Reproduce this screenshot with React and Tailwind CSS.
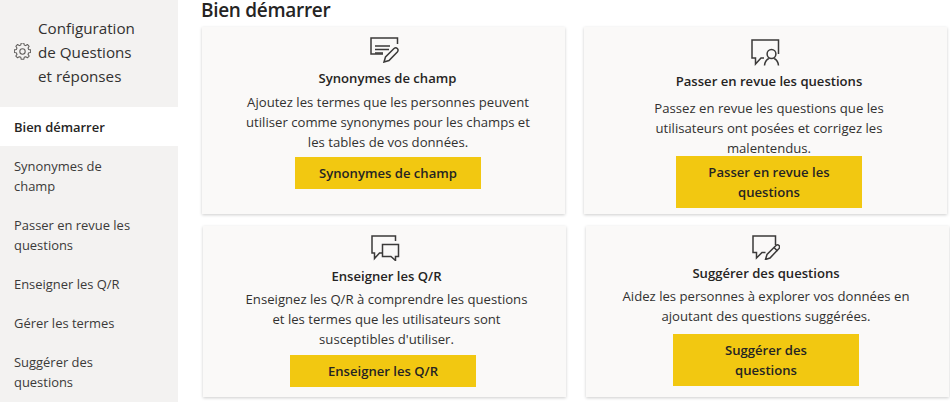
const ff = { fontFamily: '"Open Sans", "Liberation Sans", sans-serif' };

const ChartIcon = ({ kind }) => {
  const common = { fill: "none", stroke: "#3b3a39", strokeWidth: 1.5 };
  if (kind === "syn")
    return (
      <svg width="29" height="26" viewBox="0 0 29 26" {...common}>
        <path d="M27.500 7V1H1V17H13" />
        <path d="M5 9H20M5 12.500H19M5 16H13" />
        <path d="M14 25L15.500 20L24 11.500Q25.800 10 27.300 11.500Q28.800 13 27.300 15L19 23.500Z" />
      </svg>
    );
  if (kind === "rev")
    return (
      <svg width="29" height="27" viewBox="0 0 29 27" {...common}>
        <path d="M27.500 15V1H1V19H4.500V25L10 19H13" />
        <circle cx="20.500" cy="15" r="4.400" />
        <path d="M13.500 26.500Q14 21.500 17.800 19.500M27.500 26.500Q27 21.500 23.200 19.500" />
      </svg>
    );
  if (kind === "teach")
    return (
      <svg width="29" height="26" viewBox="0 0 29 26" {...common}>
        <path d="M24.500 6V1H1V18H3.500V23.500L8.500 18H11" />
        <path d="M11.500 9.500H27.500V21.500H24.500V25.500L20 21.500H11.500Z" />
      </svg>
    );
  return (
    <svg width="28" height="25" viewBox="0 0 28 25" {...common}>
      <path d="M23.500 10V1H1V17.500H4.500V23L10 17.500H13.500" />
      <path d="M13.500 24.500L15 19.500L24 10.500Q25.500 9 27 10.500Q28.300 12 27 13.500L18 23Z" />
      <path d="M22 12.500L25.500 16" />
    </svg>
  );
};

const Card = ({ className, bodyClass, icon, iconClass, title, titleClass, body, btn, btnClass }) => (
  <div className={`bg-[#faf9f8] w-[363px] shadow-[0_1px_3px_rgba(0,0,0,0.2)] flex flex-col items-center ${className}`}>
    <div className={iconClass}>
      <ChartIcon kind={icon} />
    </div>
    <div className={`text-[13.1px] font-semibold leading-5 text-[#252423] whitespace-nowrap ${titleClass}`}>{title}</div>
    <div className={`text-[13.15px] leading-5 text-[#323130] text-center whitespace-nowrap ${bodyClass}`}>{body}</div>
    <div className={`w-[186px] bg-[#f2c811] text-[13.1px] font-semibold leading-5 text-[#252423] text-center flex items-center justify-center px-2 ${btnClass}`}>
      {btn}
    </div>
  </div>
);

const NavItem = ({ children, active }) => (
  <div
    className={`px-[14px] text-[12.95px] leading-5 ${active ? "bg-white font-semibold text-[#252423] py-[10px] h-[39px]" : "text-[#3b3a39]"}`}
  >
    {children}
  </div>
);

export default function App() {
  return (
    <div style={ff} className="w-[950px] h-[402px] overflow-hidden flex bg-white">
      <aside className="w-[178px] h-[402px] bg-[#f3f2f1] shrink-0 flex flex-col">
        <div className="h-[103px] mb-[4px] flex items-center pl-[14px] gap-[7px]">
          <svg width="17" height="17" viewBox="0 0 24 24" fill="none" stroke="#605e5c" strokeWidth="1.5" strokeLinejoin="round">
            <path d="M10.200 1.500h3.600l.6 2.800 2.100.9 2.400-1.600 2.500 2.500-1.600 2.400.9 2.100 2.800.6v3.600l-2.800.6-.9 2.100 1.600 2.400-2.500 2.500-2.400-1.600-2.100.9-.6 2.800h-3.600l-.6-2.800-2.100-.9-2.400 1.600-2.500-2.500 1.600-2.400-.9-2.100-2.800-.6v-3.600l2.800-.6.900-2.100-1.600-2.400 2.500-2.500 2.400 1.600 2.100-.9z" transform="translate(0 -1.500)" />
            <circle cx="12" cy="12" r="3.800" />
          </svg>
          <div className="text-[15.2px] leading-6 text-[#323130]">
            Configuration
            <br />
            de Questions
            <br />
            et réponses
          </div>
        </div>
        <NavItem active>Bien démarrer</NavItem>
        <div className="flex flex-col gap-[19px] pt-[10px]">
          <NavItem>Synonymes de<br />champ</NavItem>
          <NavItem>Passer en revue les<br />questions</NavItem>
          <NavItem>Enseigner les Q/R</NavItem>
          <NavItem>Gérer les termes</NavItem>
          <NavItem>Suggérer des<br />questions</NavItem>
        </div>
      </aside>
      <main className="flex-1 min-w-0 flex flex-col">
        <h1 className="text-[19px] tracking-[-0.3px] leading-5 font-semibold text-[#252423] ml-[23px] h-[27px]">Bien démarrer</h1>
        <div className="flex gap-[19px] ml-[24px]">
          <Card
            className="h-[187px]"
            icon="syn"
            iconClass="mt-[10px] h-[27px] ml-[2px]"
            title="Synonymes de champ"
            titleClass="mt-[4px] ml-[8px]"
            body={<>Ajoutez les termes que les personnes peuvent<br />utiliser comme synonymes pour les champs et<br />les tables de vos données.</>}
            bodyClass="mt-[4px] ml-[9px]"
            btn="Synonymes de champ"
            btnClass="h-[32px] mt-[5px] ml-[9px]"
          />
          <Card
            icon="rev"
            className="h-[187px]"
            iconClass="mt-[12px] h-[28px]"
            title="Passer en revue les questions"
            titleClass="mt-[4px] ml-[7px]"
            body={<>Passez en revue les questions que les<br />utilisateurs ont posées et corrigez les<br />malentendus.</>}
            bodyClass="mt-[7px] ml-[7px]"
            btn={<span className="px-4">Passer en revue les questions</span>}
            btnClass="h-[52px] -mt-[2px] ml-[7px]"
          />
        </div>
        <div className="flex gap-[20px] ml-[25px] mt-[12px]">
          <Card
            className="h-[171px]"
            icon="teach"
            iconClass="mt-[9px] h-[27px] ml-[1px]"
            title="Enseigner les Q/R"
            titleClass="mt-[4px] ml-[4px]"
            body={<>Enseignez les Q/R à comprendre les questions<br />et les termes que les utilisateurs sont<br />susceptibles d'utiliser.</>}
            bodyClass="mt-[3px] ml-[4px]"
            btn="Enseigner les Q/R"
            btnClass="h-[32px] mt-[6px] -ml-[3px]"
          />
          <Card
            className="h-[171px]"
            icon="sug"
            iconClass="mt-[9px] h-[27px] -ml-[4px]"
            title="Suggérer des questions"
            titleClass="mt-[1px] -ml-[3px]"
            body={<>Aidez les personnes à explorer vos données en<br />ajoutant des questions suggérées.</>}
            bodyClass="mt-[3px] -ml-[3px]"
            btn={<span className="px-4">Suggérer des questions</span>}
            btnClass="h-[52px] mt-[8px] -ml-[3px]"
          />
        </div>
      </main>
    </div>
  );
}
